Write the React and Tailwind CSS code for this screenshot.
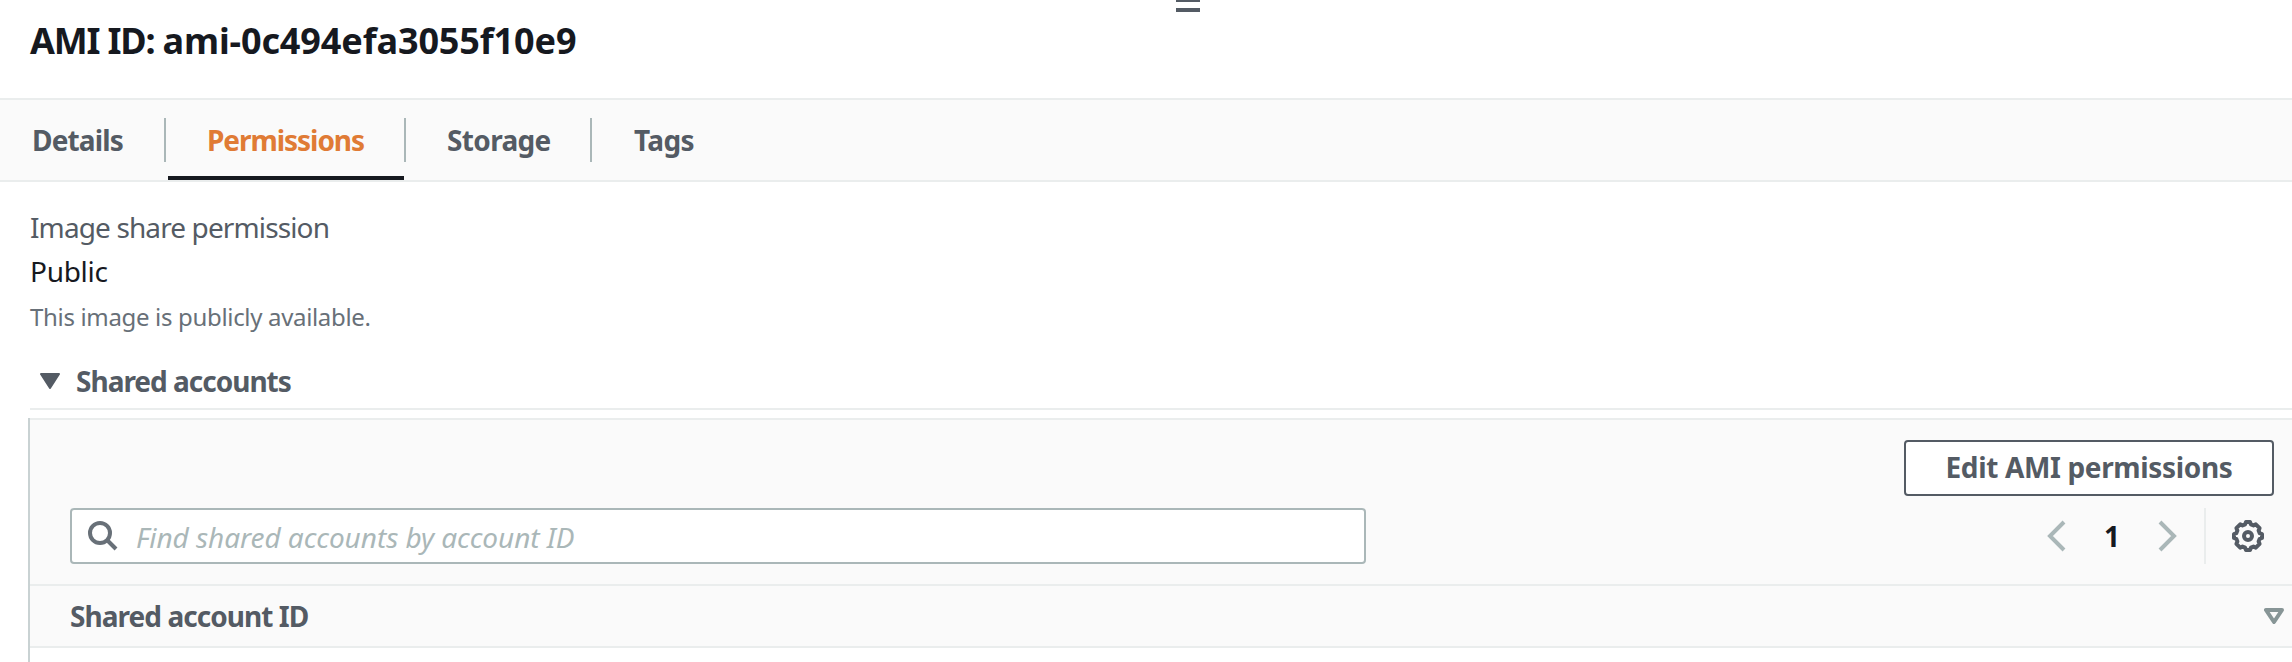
const tabs = [
  { label: "Details", box: "w-[132px]", text: "tracking-[-0.85px]" },
  { label: "Permissions", box: "w-[238px] pl-[41px]", text: "tracking-[-1.05px]", active: true },
  { label: "Storage", box: "w-[184px] pl-[41px]", text: "tracking-[-0.65px]" },
  { label: "Tags", box: "pl-[42px]", text: "tracking-[-0.6px]" },
];

function Tab({ tab, last }) {
  return (
    <div className="flex h-full items-center">
      <button
        className={`relative flex h-full items-center whitespace-nowrap pb-px text-[28px] font-bold ${tab.box} ${tab.text} ${
          tab.active ? "text-[#e07b35]" : "text-[#545b64]"
        }`}
      >
        {tab.label}
        {tab.active && <span className="absolute bottom-0 left-0.5 h-1 w-[236px] bg-[#16191f]" />}
      </button>
      {!last && <span className="h-11 w-0.5 bg-[#aab7b8]" />}
    </div>
  );
}

function Chevron({ flip }) {
  return (
    <svg className={`h-8 w-5 ${flip ? "-scale-x-100" : ""}`} viewBox="0 0 20 32" fill="none" stroke="#aab7b8" strokeWidth="4">
      <path d="M18 2L4 16l14 14" />
    </svg>
  );
}

function Gear() {
  return (
    <svg className="h-8 w-8" viewBox="0 0 32 32" fill="none" stroke="#545b64" strokeWidth="4" strokeLinejoin="round">
      <path d="M14 2L18 2 18.9 4.3 21.5 5.4 23.8 4.4 27.6 8.2 26.6 10.5 27.7 13.1 30 14 30 18 27.7 18.9 26.6 21.5 27.6 23.8 23.8 27.6 21.5 26.6 18.9 27.7 18 30 14 30 13.1 27.7 10.5 26.6 8.2 27.6 4.4 23.8 5.4 21.5 4.3 18.9 2 18 2 14 4.3 13.1 5.4 10.5 4.4 8.2 8.2 4.4 10.5 5.4 13.1 4.3z" />
      <circle cx="16" cy="16" r="4" />
    </svg>
  );
}

export default function App() {
  return (
    <div className="flex h-[662px] w-full flex-col overflow-hidden bg-white font-['Noto_Sans',sans-serif] text-[#16191f]">
      <header className="relative h-[98px] shrink-0 pl-[30px]">
        <h1 className="text-4xl leading-[82px] font-bold tracking-[-0.12px]">
          <span className="tracking-[-1.2px]">AMI ID: </span>ami-0c494efa3055f10e9
        </h1>
        <div className="absolute top-0 left-[1176px] flex w-6 flex-col gap-1.5">
          <span className="h-0.5 bg-[#545b64]" />
          <span className="h-1 bg-[#545b64]" />
        </div>
      </header>

      <nav className="flex h-[84px] shrink-0 items-center border-y-2 border-[#eaeded] bg-[#fafafa] pl-8">
        {tabs.map((tab, i) => (
          <Tab key={tab.label} tab={tab} last={i === tabs.length - 1} />
        ))}
      </nav>

      <main className="flex grow flex-col pt-[23px] pl-[30px]">
        <p className="text-[28px] leading-[44px] tracking-[-0.88px] text-[#545b64]">Image share permission</p>
        <p className="text-[28px] leading-[44px] tracking-[-0.3px]">Public</p>
        <p className="pt-0.5 text-2xl leading-[44px] tracking-[-0.33px] text-[#687078]">This image is publicly available.</p>

        <div className="mt-[15px] flex h-14 items-center border-b-2 border-[#eaeded] pl-2.5 text-[#545b64]">
          <svg className="h-4 w-5" viewBox="0 0 20 16" fill="currentColor" stroke="currentColor" strokeWidth="2" strokeLinejoin="round">
            <path d="M1 1h18l-9 14z" />
          </svg>
          <h2 className="pl-4 text-[28px] font-bold tracking-[-1px]">Shared accounts</h2>
        </div>

        <section className="-ml-0.5 mt-2 grow border-l-2 border-[#c9d2d3]">
          <div className="border-y-2 border-[#eaeded] bg-[#fafafa]">
            <div className="flex justify-end pt-5 pr-[18px]">
              <button className="h-14 w-[370px] rounded border-2 border-[#545b64] bg-white pb-0.5 text-[28px] font-bold tracking-[-0.35px] text-[#545b64]">
                Edit AMI permissions
              </button>
            </div>
            <div className="flex items-center pt-3 pb-5 pl-10">
              <label className="flex h-14 w-[1296px] items-center rounded border-2 border-[#aab7b8] bg-white pl-4">
                <svg className="h-[30px] w-[30px]" viewBox="0 0 30 30" fill="none" stroke="#687078" strokeWidth="4">
                  <circle cx="12" cy="12" r="10" />
                  <path d="M19 19l9 9" />
                </svg>
                <span className="pt-0.5 pl-[18px] text-[28px] tracking-[-0.06px] text-[#aab7b8] italic">Find shared accounts by account ID</span>
              </label>
              <div className="ml-auto flex items-center pr-7">
                <Chevron />
                <span className="w-[92px] text-center text-[28px] leading-9 font-bold">1</span>
                <Chevron flip />
                <span className="mr-[26px] ml-[26px] h-14 w-0.5 bg-[#eaeded]" />
                <Gear />
              </div>
            </div>
          </div>
          <div className="flex h-[62px] items-center justify-between border-b-2 border-[#eaeded] bg-[#fafafa] pr-2 pl-10 text-[#545b64]">
            <span className="pb-px text-[28px] font-bold tracking-[-0.95px]">Shared account ID</span>
            <svg className="h-4 w-5" viewBox="0 0 20 16" fill="none" stroke="#879596" strokeWidth="4" strokeLinejoin="round">
              <path d="M2 2h16l-8 12z" />
            </svg>
          </div>
        </section>
      </main>
    </div>
  );
}
